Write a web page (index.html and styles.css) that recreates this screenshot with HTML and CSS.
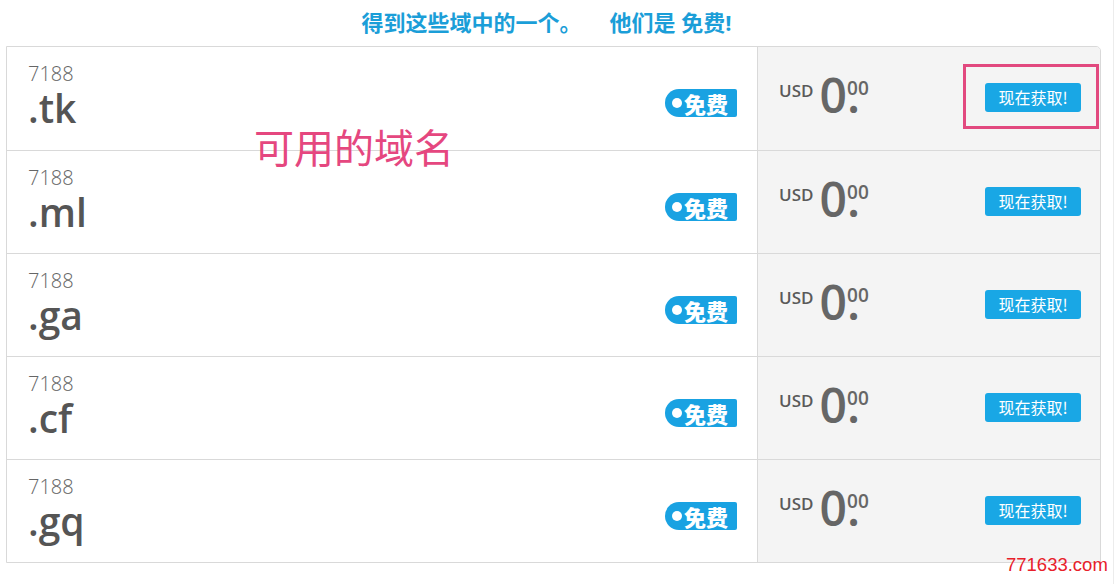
FILE: index.html
```html
<!DOCTYPE html>
<html lang="zh-CN">
<head>
<meta charset="utf-8">
<title>免费域名</title>
<link rel="stylesheet" href="styles.css">
</head>
<body>
<div class="page">
  <h1 class="title">得到这些域中的一个。<span class="gap"></span>他们是 免费!</h1>
  <div class="table">
    <div class="row">
      <div class="name-col">
        <div class="name"><div class="num">7188</div><div class="tld">.tk</div></div>
        <div class="badge"><span class="dot"></span>免费</div>
      </div>
      <div class="price-col">
        <div class="price"><span class="usd">USD</span><span class="amt"><span class="int">0</span><span class="pt">.</span><span class="dec">00</span></span></div>
        <button class="btn">现在获取!</button>
      </div>
    </div>
    <div class="row">
      <div class="name-col">
        <div class="name"><div class="num">7188</div><div class="tld">.ml</div></div>
        <div class="badge"><span class="dot"></span>免费</div>
      </div>
      <div class="price-col">
        <div class="price"><span class="usd">USD</span><span class="amt"><span class="int">0</span><span class="pt">.</span><span class="dec">00</span></span></div>
        <button class="btn">现在获取!</button>
      </div>
    </div>
    <div class="row">
      <div class="name-col">
        <div class="name"><div class="num">7188</div><div class="tld">.ga</div></div>
        <div class="badge"><span class="dot"></span>免费</div>
      </div>
      <div class="price-col">
        <div class="price"><span class="usd">USD</span><span class="amt"><span class="int">0</span><span class="pt">.</span><span class="dec">00</span></span></div>
        <button class="btn">现在获取!</button>
      </div>
    </div>
    <div class="row">
      <div class="name-col">
        <div class="name"><div class="num">7188</div><div class="tld">.cf</div></div>
        <div class="badge"><span class="dot"></span>免费</div>
      </div>
      <div class="price-col">
        <div class="price"><span class="usd">USD</span><span class="amt"><span class="int">0</span><span class="pt">.</span><span class="dec">00</span></span></div>
        <button class="btn">现在获取!</button>
      </div>
    </div>
    <div class="row">
      <div class="name-col">
        <div class="name"><div class="num">7188</div><div class="tld">.gq</div></div>
        <div class="badge"><span class="dot"></span>免费</div>
      </div>
      <div class="price-col">
        <div class="price"><span class="usd">USD</span><span class="amt"><span class="int">0</span><span class="pt">.</span><span class="dec">00</span></span></div>
        <button class="btn">现在获取!</button>
      </div>
    </div>
  </div>
</div>
<div class="note">可用的域名</div>
<div class="highlight"></div>
<div class="watermark">771633.com</div>
<div class="edge"></div>
</body>
</html>
```
FILE: styles.css
```css
html, body {
  margin: 0;
  padding: 0;
  background: #ffffff;
}
body {
  width: 1120px;
  height: 584px;
  overflow: hidden;
  font-family: "Open Sans", "Noto Sans CJK SC", sans-serif;
}
.page {
  padding-left: 6px;
  width: 1095px;
}
.title {
  margin: 0;
  height: 46px;
  line-height: 44px;
  padding-right: 14px;
  text-align: center;
  font-size: 22px;
  font-weight: 700;
  color: #1b9ed8;
  font-family: "Open Sans", "Noto Sans CJK SC", sans-serif;
}
.gap {
  display: inline-block;
  width: 28px;
}
.table {
  border: 1px solid #d9d9d9;
  border-top-right-radius: 5px;
  overflow: hidden;
}
.row {
  display: flex;
  height: 102px;
  border-bottom: 1px solid #d9d9d9;
}
.row:first-child {
  height: 103px;
}
.row:last-child {
  border-bottom: none;
}
.name-col {
  width: 750px;
  box-sizing: border-box;
  display: flex;
  justify-content: space-between;
  align-items: flex-start;
  padding: 15px 20px 0 21px;
  background: #ffffff;
}
.num {
  font-size: 20px;
  line-height: 24px;
  color: #666666;
  font-weight: 300;
}
.tld {
  margin-top: 3px;
  font-size: 39px;
  line-height: 38px;
  font-weight: 600;
  color: #555555;
}
.badge {
  margin-top: 27px;
  height: 28px;
  width: 72px;
  box-sizing: border-box;
  display: flex;
  align-items: center;
  padding-left: 7px;
  border-radius: 14px 2px 2px 14px;
  background: #19a2e2;
  color: #ffffff;
  font-family: "Noto Sans CJK SC", sans-serif;
  font-weight: 900;
  font-size: 22px;
  line-height: 28px;
}
.dot {
  width: 10px;
  height: 10px;
  border-radius: 50%;
  background: #ffffff;
  margin-right: 2px;
  flex: none;
}
.price-col {
  flex: 1;
  border-left: 1px solid #d9d9d9;
  background: #f4f4f4;
  display: flex;
  justify-content: space-between;
  align-items: flex-start;
  padding: 24px 19px 0 21px;
}
.price {
  display: flex;
  align-items: flex-start;
  color: #666666;
}
.usd {
  margin-top: 11px;
  margin-right: 6px;
  font-size: 17px;
  line-height: 17px;
  font-weight: 600;
  color: #5a5a5a;
}
.amt {
  font-size: 48px;
  line-height: 48px;
  color: #666666;
  font-weight: 600;
}
.dec {
  font-size: 19px;
  line-height: 19px;
  vertical-align: 18px;
  margin-left: -13px;
  font-weight: 600;
}
.btn {
  margin-top: 12px;
  width: 96px;
  height: 29px;
  padding: 0;
  border: none;
  border-radius: 3px;
  background: #19a7e5;
  color: #ffffff;
  font-family: "Noto Sans CJK SC", sans-serif;
  font-size: 16px;
  line-height: 29px;
  cursor: pointer;
}
.note {
  position: absolute;
  left: 254px;
  top: 126px;
  font-family: "Noto Sans CJK SC", sans-serif;
  font-size: 40px;
  line-height: 40px;
  color: #e5477f;
}
.highlight {
  position: absolute;
  left: 963px;
  top: 64px;
  width: 136px;
  height: 65px;
  box-sizing: border-box;
  border: 3px solid #e2497f;
}
.watermark {
  position: absolute;
  left: 1006px;
  top: 553px;
  font-family: "Liberation Sans", sans-serif;
  font-size: 18.5px;
  line-height: 24px;
  color: #e8202a;
}
.edge {
  position: absolute;
  left: 1113px;
  top: 0;
  width: 1px;
  height: 584px;
  background: #ececec;
}
```
